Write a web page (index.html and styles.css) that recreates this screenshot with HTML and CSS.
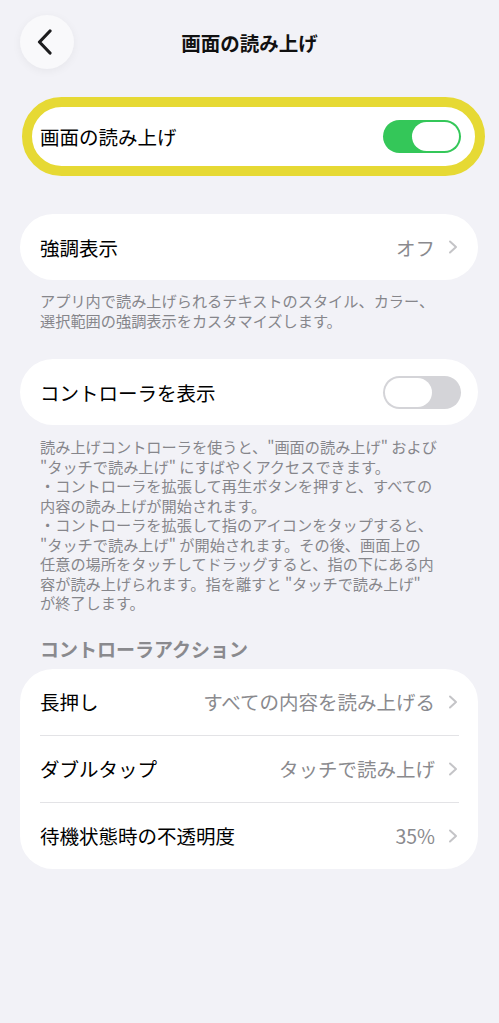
FILE: index.html
```html
<!DOCTYPE html>
<html lang="ja">
<head>
    <meta charset="UTF-8">
    <meta name="viewport" content="width=device-width, initial-scale=1.0">
    <title>画面の読み上げ</title>
    <link rel="stylesheet" href="styles.css">
</head>
<body>
    <header class="nav">
        <button class="back" aria-label="戻る">
            <svg width="18" height="26" viewBox="0 0 18 26">
                <path d="M14 2 L3.5 13 L14 24" fill="none" stroke="#1c1c1e" stroke-width="3.2" stroke-linecap="round" stroke-linejoin="round"/>
            </svg>
        </button>
        <h1 class="title">画面の読み上げ</h1>
        <span></span>
    </header>

    <div class="highlight">
        <div class="row">
            <span class="label">画面の読み上げ</span>
            <span class="toggle on"><span class="knob"></span></span>
        </div>
    </div>

    <div class="card first-card">
        <div class="row link">
            <span class="label">強調表示</span>
            <span class="value">オフ<svg class="chev" width="10" height="14" viewBox="0 0 10 14"><path d="M2 1.5 L8 7 L2 12.5" fill="none" stroke="#c4c4c7" stroke-width="2" stroke-linecap="round" stroke-linejoin="round"/></svg></span>
        </div>
    </div>
    <p class="footer">アプリ内で読み上げられるテキストのスタイル、カラー、<br>選択範囲の強調表示をカスタマイズします。</p>

    <div class="card">
        <div class="row">
            <span class="label">コントローラを表示</span>
            <span class="toggle"><span class="knob"></span></span>
        </div>
    </div>
    <p class="footer long">読み上げコントローラを使うと、"画面の読み上げ" および<br>"タッチで読み上げ" にすばやくアクセスできます。<br>・コントローラを拡張して再生ボタンを押すと、すべての<br>内容の読み上げが開始されます。<br>・コントローラを拡張して指のアイコンをタップすると、<br>"タッチで読み上げ" が開始されます。その後、画面上の<br>任意の場所をタッチしてドラッグすると、指の下にある内<br>容が読み上げられます。指を離すと "タッチで読み上げ"<br>が終了します。</p>

    <h2 class="section">コントローラアクション</h2>
    <div class="card">
        <div class="row link">
            <span class="label">長押し</span>
            <span class="value">すべての内容を読み上げる<svg class="chev" width="10" height="14" viewBox="0 0 10 14"><path d="M2 1.5 L8 7 L2 12.5" fill="none" stroke="#c4c4c7" stroke-width="2" stroke-linecap="round" stroke-linejoin="round"/></svg></span>
        </div>
        <div class="sep"></div>
        <div class="row link">
            <span class="label">ダブルタップ</span>
            <span class="value">タッチで読み上げ<svg class="chev" width="10" height="14" viewBox="0 0 10 14"><path d="M2 1.5 L8 7 L2 12.5" fill="none" stroke="#c4c4c7" stroke-width="2" stroke-linecap="round" stroke-linejoin="round"/></svg></span>
        </div>
        <div class="sep"></div>
        <div class="row link">
            <span class="label">待機状態時の不透明度</span>
            <span class="value">35%<svg class="chev" width="10" height="14" viewBox="0 0 10 14"><path d="M2 1.5 L8 7 L2 12.5" fill="none" stroke="#c4c4c7" stroke-width="2" stroke-linecap="round" stroke-linejoin="round"/></svg></span>
        </div>
    </div>
</body>
</html>
```

FILE: styles.css
```css
body {
    margin: 0;
    background: #f2f2f7;
    font-family: "Noto Sans CJK JP", "Noto Sans", sans-serif;
    color: #000;
}
.nav {
    display: grid;
    grid-template-columns: 54px 1fr 54px;
    align-items: center;
    padding: 15px 20px 0 20px;
    height: 54px;
}
.back {
    width: 54px;
    height: 54px;
    border-radius: 50%;
    border: none;
    background: #f9f9fb;
    box-shadow: 0 2px 10px rgba(0, 0, 0, 0.05);
    display: flex;
    align-items: center;
    justify-content: center;
    padding: 0 4px 0 0;
}
.title {
    margin: 0;
    text-align: center;
    font-size: 19.5px;
    font-weight: 700;
    color: #111;
}
.highlight {
    margin: 28px 0 0 22px;
    width: 443px;
    border: 10px solid #e6d934;
    border-radius: 40px;
    background: #fff;
}
.highlight .row {
    height: 59px;
    padding: 0 14px 0 8px;
}
.card {
    margin: 0 21px 0 20px;
    background: #fff;
    border-radius: 33px;
}
.first-card {
    margin-top: 38px;
}
.row {
    display: flex;
    align-items: center;
    justify-content: space-between;
    height: 66px;
    padding: 0 17px 0 20px;
}
.row.link {
    padding-right: 20px;
}
.label {
    font-size: 19.5px;
}
.value {
    display: flex;
    align-items: center;
    font-size: 19.5px;
    color: #8a8a8e;
}
.chev {
    margin-left: 13px;
}
.sep {
    height: 1px;
    background: #e3e3e6;
    margin: 0 19px 0 20px;
}
.toggle {
    display: flex;
    width: 78px;
    height: 33px;
    border-radius: 17px;
    background: #d4d4d8;
    padding: 2px;
    box-sizing: border-box;
    justify-content: flex-start;
}
.toggle.on {
    background: #34c759;
    justify-content: flex-end;
}
.knob {
    width: 47px;
    height: 29px;
    border-radius: 15px;
    background: #fff;
}
.footer {
    margin: 10px 0 0 0;
    padding: 0 20px 0 40px;
    font-size: 15.2px;
    line-height: 20px;
    color: #86868b;
    white-space: nowrap;
}
.footer + .card {
    margin-top: 29px;
}
.footer.long {
    margin-top: 12px;
    line-height: 19.5px;
}
.section {
    margin: 24px 0 8px 0;
    padding-left: 40px;
    font-size: 19px;
    line-height: 24px;
    font-weight: 700;
    color: #8a8a8e;
}
```
